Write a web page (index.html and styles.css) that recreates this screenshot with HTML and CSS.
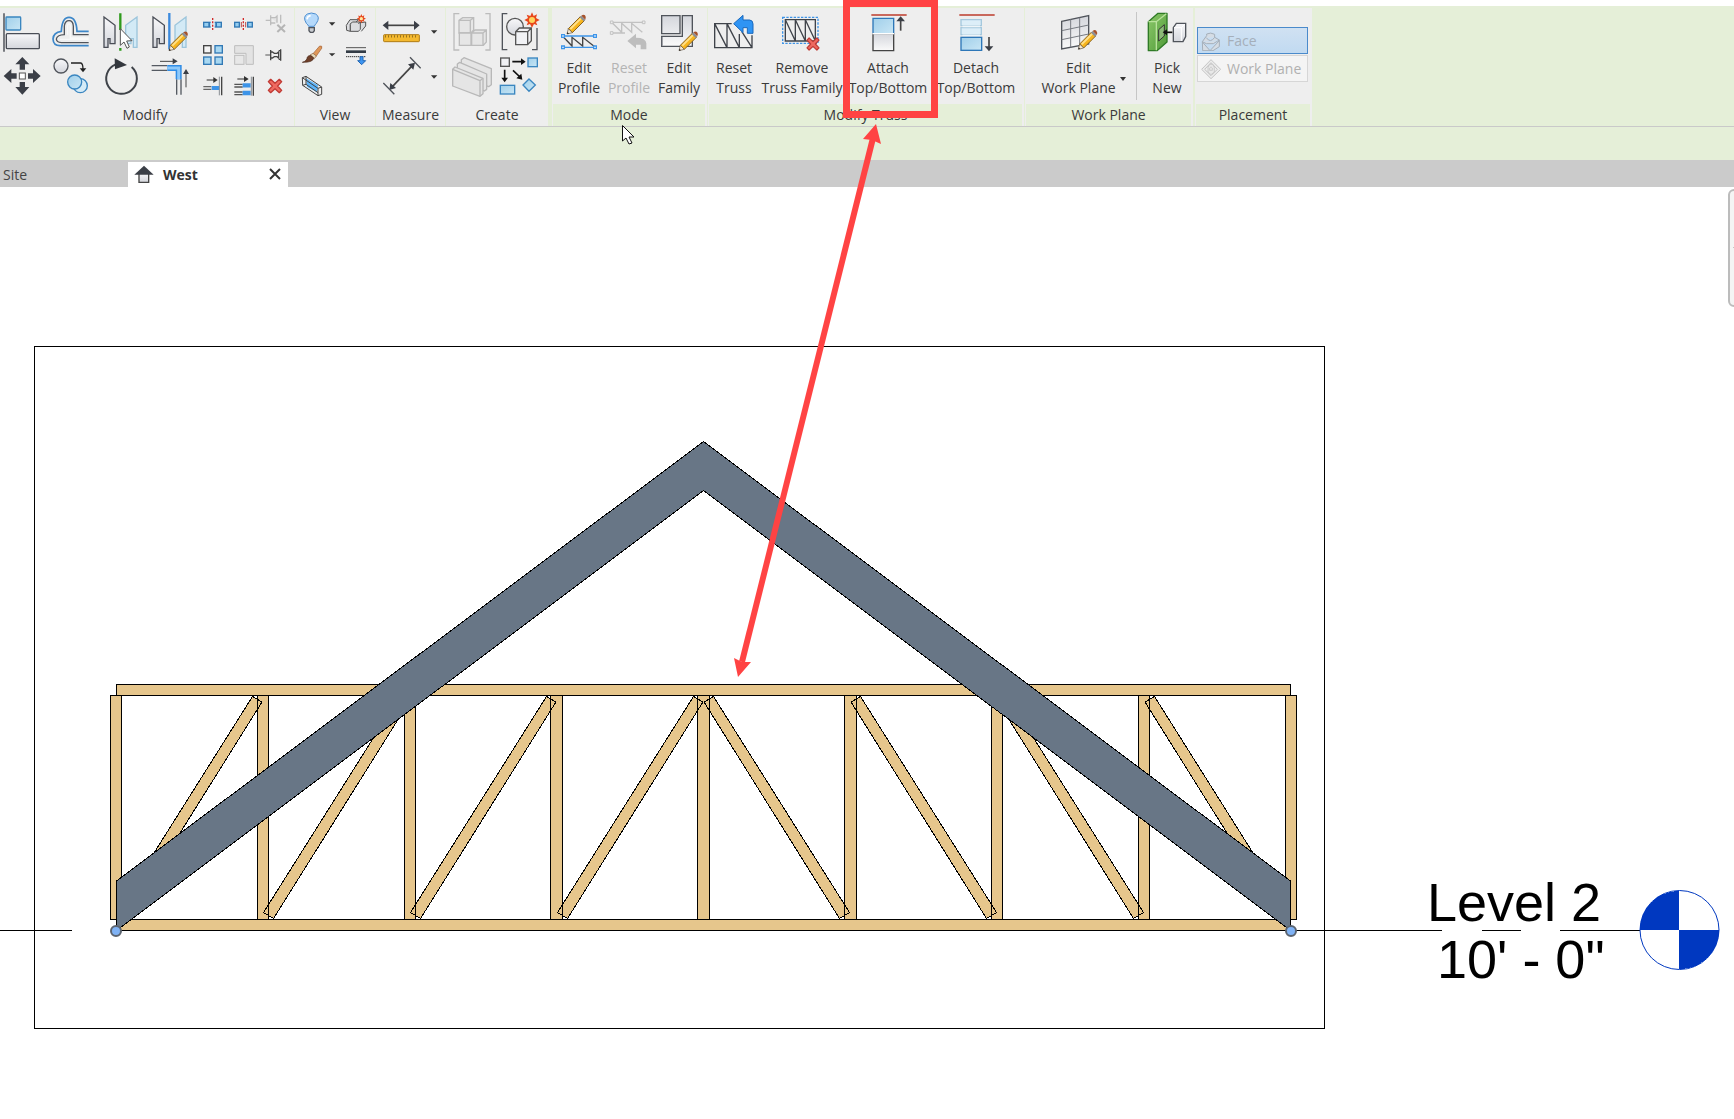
FILE: index.html
```html
<!DOCTYPE html>
<html lang="en">
<head>
<meta charset="utf-8">
<title>West - Elevation</title>
<link rel="stylesheet" href="styles.css">
</head>
<body>
<svg class="defs" aria-hidden="true">
  <defs>
    <linearGradient id="blue" x1="0" y1="0" x2="1" y2="1"><stop offset="0" stop-color="#a0cfea"/><stop offset="1" stop-color="#c9e6f5"/></linearGradient>
    <linearGradient id="pale" x1="0" y1="0" x2="0" y2="1"><stop offset="0" stop-color="#f8f8fa"/><stop offset="1" stop-color="#d4d6dc"/></linearGradient>
    <linearGradient id="metal" x1="0" y1="0" x2="0" y2="1"><stop offset="0" stop-color="#d4d6dc"/><stop offset="1" stop-color="#fafafa"/></linearGradient>
    <linearGradient id="green" x1="0" y1="0" x2="1" y2="1"><stop offset="0" stop-color="#8cc86a"/><stop offset="1" stop-color="#4f9a38"/></linearGradient>
    <g id="pencil">
      <path d="M4-16 40-52 52-40 16-4z" fill="#f7b51e" stroke="#8a6320" stroke-width="3"/>
      <path d="M8-17 42-51 46-47 12-13z" fill="#ffe08a"/>
      <path d="M0 0 4-16 16-4z" fill="#f8ead0" stroke="#5f5240" stroke-width="2"/>
      <path d="M0 0 1-6 6-1z" fill="#222"/>
      <path d="M38-50 43-55 55-43 50-38z" fill="#8b8f96"/>
      <path d="M43-55Q49-60 54-56 59-50 55-43z" fill="#a5522c"/>
    </g>
    <path id="cross" d="M-20-13-13-20 0-8 13-20 20-13 8 0 20 13 13 20 0 8-13 20-20 13-8 0z" fill="#ef6a60" stroke="#c03a34" stroke-width="4" stroke-linejoin="round"/>
    <path id="burst" d="M0-23 5-12 15-17 12-6 23 0 12 6 16 16 6 12 0 23-6 12-16 16-12 6-23 0-12-6-16-16-5-12z" fill="#e8471c"/>
  </defs>
</svg>

<header class="ribbon">
  <section class="panel panel-modify">
    <div class="panel-body">
      <div class="tools-large">
        <button class="tool" aria-label="Align"><svg viewBox="6 36 120 120"><path d="M12 40V155" stroke="#3b3f47" stroke-width="4"/><rect x="18" y="51" width="44" height="39" rx="2" fill="url(#blue)" stroke="#3a86c0" stroke-width="4"/><rect x="19" y="101" width="99" height="45" rx="3" fill="url(#pale)" stroke="#4a4e57" stroke-width="4"/></svg></button>
        <button class="tool" aria-label="Offset"><svg viewBox="153 36 120 120"><g fill="none" stroke-width="5"><path d="M266 137H180Q160 137 159 117 160 97 184 94 186 52 207 52 229 52 231 94H266" stroke="#3d87c9"/><path d="M266 118H180M203 104V75Q207 68 211 75V114H266" stroke="#f8f8f8" stroke-width="4"/><path d="M266 128H184Q170 127 169 117 171 105 193 104V78Q195 62 207 62 219 62 220 78V104H266" stroke="#50545b" stroke-width="4"/></g></svg></button>
        <button class="tool" aria-label="Mirror - Pick Axis"><svg viewBox="300 36 120 120"><path d="M312 51 345 76V131H330V116H324V142H312z" fill="url(#pale)" stroke="#4a4e57" stroke-width="4"/><path d="M411 51 377 76V131H393V116H400V142H411z" fill="#d3eaf6" stroke="#9cc5dc" stroke-width="4"/><path d="M361 40V152" stroke="#2f9a1c" stroke-width="7" stroke-dasharray="50 54"/><path d="M361 86V136L372 126 381 145 388 141 380 123 396 122z" fill="#fff" stroke="#555" stroke-width="3"/></svg></button>
        <button class="tool" aria-label="Mirror - Draw Axis"><svg viewBox="447 36 120 120"><path d="M459 51 493 76V131H478V116H471V142H459z" fill="url(#pale)" stroke="#4a4e57" stroke-width="4"/><path d="M558 51 525 76V131H540V116H547V142H558z" fill="#d3eaf6" stroke="#9cc5dc" stroke-width="4"/><path d="M508 39V148" stroke="#3b8ade" stroke-width="7"/><use href="#pencil" x="507" y="152"/></svg></button>
        <button class="tool" aria-label="Move"><svg viewBox="6 168 120 120"><path d="M67 171 88 193H75V209H59V193H46zM67 284 46 261H59V246H75V261H88zM11 228 34 207V220H50V236H34V249zM122 228 99 207V220H84V236H99V249z" fill="#3b3f47"/><rect x="58" y="219" width="18" height="18" fill="#fff" stroke="#555" stroke-width="3"/></svg></button>
        <button class="tool" aria-label="Copy"><svg viewBox="153 168 120 120"><circle cx="183" cy="198" r="21" fill="url(#pale)" stroke="#50545b" stroke-width="4"/><path d="M213 189H242Q249 190 249 208" fill="none" stroke="#222" stroke-width="4"/><path d="M239 205H259L249 217z" fill="#222"/><circle cx="241" cy="257" r="21" fill="#d5ebf7" stroke="#3a86c0" stroke-width="4"/><circle cx="224" cy="246" r="21" fill="url(#blue)" stroke="#3a86c0" stroke-width="4"/></svg></button>
        <button class="tool" aria-label="Rotate"><svg viewBox="300 168 120 120"><path d="M395 201A46 46 0 1 1 347 193" fill="none" stroke="#3f4349" stroke-width="6"/><path d="M344 175 381 195 345 208z" fill="#33373d"/></svg></button>
        <button class="tool" aria-label="Trim/Extend to Corner"><svg viewBox="447 168 120 120"><path d="M455 197H502M455 211H502M530 238V284M543 238V284" stroke="#555a62" stroke-width="4"/><path d="M502 204H536V238" fill="none" stroke="#2f8ce6" stroke-width="18"/><path d="M502 204H536V238" fill="none" stroke="#8cc8fa" stroke-width="9"/><path d="M480 184H525M558 262V216" stroke="#444" stroke-width="3"/><path d="M518 175 533 184 518 193zM549 222 558 207 567 222z" fill="#3b3f47"/></svg></button>
      </div>
      <div class="tools-small">
        <button class="tool" aria-label="Split Element"><svg viewBox="603 36 72 72"><rect x="611" y="67" width="53" height="14" fill="#94cdf0" stroke="#3279b5" stroke-width="4"/><path d="M638 55V94" stroke="#eee" stroke-width="12"/><path d="M638 54V94" stroke="#d22a2a" stroke-width="4" stroke-dasharray="6 4"/><path d="M630 74H625M646 74H651" stroke="#3279b5" stroke-width="14"/></svg></button>
        <button class="tool" aria-label="Split with Gap"><svg viewBox="696 36 72 72"><rect x="704" y="67" width="14" height="14" fill="#94cdf0" stroke="#3279b5" stroke-width="4"/><rect x="743" y="67" width="14" height="14" fill="#94cdf0" stroke="#3279b5" stroke-width="4"/><path d="M730 54V94" stroke="#d22a2a" stroke-width="4" stroke-dasharray="6 4"/><path d="M724 66V82M737 66V82" stroke="#b94a4a" stroke-width="3"/></svg></button>
        <button class="tool" aria-label="Unpin" disabled><svg viewBox="789 36 72 72"><g fill="#e4e4e4" stroke="#bdbdbd" stroke-width="4"><path d="M797 61H811M812 46V76M812 53H826L831 48V68M842 44V70M812 69H826"/><path d="M832 74 855 96M855 74 832 96" stroke="#b5b5b5" stroke-width="6"/></g></svg></button>
        <button class="tool" aria-label="Array"><svg viewBox="603 129 72 72"><g fill="#a8d8f2" stroke="#3279b5" stroke-width="4"><rect x="611" y="137" width="22" height="22" fill="#f4f4f4" stroke="#444"/><rect x="645" y="137" width="22" height="22"/><rect x="611" y="171" width="22" height="22"/><rect x="645" y="171" width="22" height="22"/></g></svg></button>
        <button class="tool" aria-label="Scale" disabled><svg viewBox="696 129 72 72"><path d="M704 137H760V193H738V160H704z" fill="#e3e3e3" stroke="#bdbdbd" stroke-width="3"/><rect x="704" y="166" width="28" height="27" fill="#e8e8e8" stroke="#bdbdbd" stroke-width="3"/></svg></button>
        <button class="tool" aria-label="Pin"><svg viewBox="789 129 72 72"><path d="M796 165H811" stroke="#555" stroke-width="3"/><path d="M812 150V181M812 156H817L823 160H831L836 156V174L831 170H823L817 174H812M842 148V182M836 152H842M836 178H842" fill="none" stroke="#444" stroke-width="4"/></svg></button>
        <button class="tool" aria-label="Trim/Extend Single"><svg viewBox="603 222 72 72"><path d="M620 240H645" stroke="#333" stroke-width="3"/><path d="M640 231 653 240 640 249z" fill="#333"/><path d="M610 260H634M610 268H634" stroke="#666" stroke-width="4"/><path d="M635 264H658" stroke="#3d94e8" stroke-width="12"/><path d="M658 230V286" stroke="#8a8e95" stroke-width="3"/><path d="M665 230V286" stroke="#444" stroke-width="4"/></svg></button>
        <button class="tool" aria-label="Trim/Extend Multiple"><svg viewBox="696 222 72 72"><path d="M712 237H737" stroke="#333" stroke-width="3"/><path d="M732 228 746 237 732 246z" fill="#333"/><path d="M703 253H728M703 261H728M703 276H728M703 284H728" stroke="#555" stroke-width="4"/><path d="M728 256H752M728 279H752" stroke="#3d94e8" stroke-width="13"/><path d="M754 230V287" stroke="#8a8e95" stroke-width="3"/><path d="M760 230V287" stroke="#444" stroke-width="4"/></svg></button>
        <button class="tool" aria-label="Delete"><svg viewBox="789 222 72 72"><use href="#cross" x="825" y="258"/></svg></button>
      </div>
    </div>
    <h2 class="panel-title">Modify</h2>
  </section>

  <section class="panel panel-view">
    <div class="panel-body">
      <div class="tools-view">
        <button class="tool" aria-label="Hide in View"><svg viewBox="27 36 72 72"><path d="M56 79Q55 75 49 70 37 50 52 42 64 36 77 42 92 51 79 70 74 75 73 79z" fill="#b5d9fb" stroke="#4d8ed0" stroke-width="3"/><path d="M51 58Q52 48 62 47" stroke="#fff" stroke-width="5" fill="none"/><path d="M57 83H73V92L69 97H61L57 92z" fill="#c9ccd1" stroke="#50545b" stroke-width="4"/></svg></button>
        <button class="drop" aria-label="Hide options"><svg viewBox="111 36 30 72"><path d="M117 67H136L126 77z" fill="#333"/></svg></button>
        <button class="tool" aria-label="Displace Elements"><svg viewBox="162 36 72 72"><g fill="#dcdde0" stroke="#555" stroke-width="3"><path d="M169 76 180 59H206L196 68 181 72V94L170 91zM211 68 227 66V78L214 94"/><path d="M181 72H205V94H181z"/><path d="M181 72 187 66H211V88L205 94M205 72 211 66"/></g><use href="#burst" transform="translate(214 56) scale(.6)"/><circle cx="214" cy="56" r="5" fill="#ffe7a0"/></svg></button>
        <button class="tool" aria-label="Override Graphics"><svg viewBox="27 129 72 72"><path d="M69 161 89 138Q98 136 95 145L79 168z" fill="#df9758" stroke="#a05c30" stroke-width="2"/><path d="M60 165 69 160 79 168 73 176z" fill="#e5d8b8" stroke="#8a5a38" stroke-width="2"/><path d="M37 187Q51 183 52 171 61 161 71 174 69 188 37 187z" fill="#70402a" stroke="#492719" stroke-width="2"/></svg></button>
        <button class="drop" aria-label="Override options"><svg viewBox="111 129 30 72"><path d="M117 160H136L126 169z" fill="#333"/></svg></button>
        <button class="tool" aria-label="Linework"><svg viewBox="162 129 72 72"><path d="M168 143H228" stroke="#555" stroke-width="3"/><path d="M168 155H228" stroke="#333b45" stroke-width="8"/><path d="M168 170H228" stroke="#333" stroke-width="3" stroke-dasharray="4 2"/><path d="M210 170H219V182H227L215 194 203 182H210z" fill="#3d94f0" stroke="#2468b5" stroke-width="3"/></svg></button>
        <button class="tool" aria-label="Selection Box"><svg viewBox="27 222 72 72"><path d="M48 235 84 256 81 277 51 260z" fill="#5db4fa"/><path d="M37 233 48 229 95 261V283L84 287 38 256zM37 233 84 265V287M84 265 95 261M48 229V253L84 278M38 256 48 253" fill="none" stroke="#444" stroke-width="3"/></svg></button>
      </div>
    </div>
    <h2 class="panel-title">View</h2>
  </section>

  <section class="panel panel-measure">
    <div class="panel-body">
      <div class="tools-measure">
        <button class="tool" aria-label="Measure"><svg viewBox="273 36 120 120"><path d="M290 76H378" stroke="#444" stroke-width="5"/><path d="M278 76 295 62V90zM389 76 372 62V90z" fill="#3b3f47"/><rect x="281" y="104" width="107" height="21" rx="2" fill="#f4b92f" stroke="#b07c14" stroke-width="3"/><path d="M286 109H384" stroke="#6b4e12" stroke-width="7" stroke-dasharray="2 7"/></svg></button>
        <button class="drop" aria-label="Measure options"><svg viewBox="417 36 30 120"><path d="M423 91H442L432 101z" fill="#333"/></svg></button>
        <button class="tool" aria-label="Aligned Dimension"><svg viewBox="273 168 120 120"><path d="M305 262 367 197" stroke="#444" stroke-width="5"/><path d="M298 270 301 249 318 264zM375 188 354 193 370 209z" fill="#3b3f47"/><path d="M280 249 313 283M360 172 392 205" stroke="#50545b" stroke-width="4"/></svg></button>
        <button class="drop" aria-label="Dimension options"><svg viewBox="417 168 30 120"><path d="M423 226H442L432 236z" fill="#333"/></svg></button>
      </div>
    </div>
    <h2 class="panel-title">Measure</h2>
  </section>

  <section class="panel panel-create">
    <div class="panel-body">
      <div class="tools-create">
        <button class="tool" aria-label="Create Group" disabled><svg viewBox="486 36 120 120"><g fill="#e6e6e6" stroke="#bcbcbc" stroke-width="4"><path d="M508 41H492V150H508M586 41H600V150H586" fill="none"/><path d="M507 99V61L518 53H551V90L543 99zM507 61H541V99M541 61 551 53"/><path d="M508 99H543V136H508zM545 99 555 90H589V126L580 136H545zM545 99H579V136M579 99 589 90"/></g></svg></button>
        <button class="tool" aria-label="Create Similar"><svg viewBox="630 36 120 120"><path d="M652 41H637V149H652M726 149H741V84" fill="none" stroke="#50545b" stroke-width="4"/><circle cx="675" cy="80" r="25" fill="url(#pale)" stroke="#555" stroke-width="4"/><path d="M677 95 688 84H724V122L713 134H677zM677 95H713V134M713 95 724 84" fill="#f1f2f5" stroke="#555" stroke-width="4"/><use href="#burst" x="726" y="60"/><circle cx="726" cy="60" r="9" fill="#ffd45c"/></svg></button>
        <button class="tool" aria-label="Create Parts" disabled><svg viewBox="486 168 120 120"><g fill="#e5e5e5" stroke="#b8b8b8" stroke-width="4" stroke-linejoin="round"><path d="M514 179 522 173 604 206V254L596 260 514 230z"/><path d="M502 192 509 187 590 222V268L583 273 502 240z"/><path d="M488 208 495 201 579 235V281L570 289 488 258z"/><path d="M488 208 570 242V289M570 242 579 235" fill="none"/></g></svg></button>
        <button class="tool" aria-label="Create Assembly"><svg viewBox="630 168 120 120"><g stroke-width="4"><rect x="632" y="174" width="26" height="25" fill="#f0f1f4" stroke="#555"/><rect x="714" y="174" width="28" height="26" fill="url(#blue)" stroke="#3a86c0"/><rect x="631" y="256" width="43" height="26" fill="url(#blue)" stroke="#3a86c0"/><path d="M717 237 736 255 717 274 699 255z" fill="url(#blue)" stroke="#3a86c0"/><path d="M667 185H697M644 209V237M669 211 690 231" stroke="#111" stroke-width="5"/></g><path d="M693 175 707 185 693 195zM634 233H654L644 247zM697 239 679 235 694 221z" fill="#111"/></svg></button>
      </div>
    </div>
    <h2 class="panel-title">Create</h2>
  </section>

  <section class="panel contextual panel-mode">
    <div class="panel-body">
      <button class="command"><svg viewBox="42 36 120 120"><use href="#pencil" x="66" y="102"/><path d="M56 112 81 138V112L113 138V112L150 141" fill="none" stroke="#444" stroke-width="4"/><path d="M54 108H150M54 142H150" stroke="#3d94e8" stroke-width="4"/><g fill="#fff" stroke="#3d94e8" stroke-width="4"><path d="M50 104h8v8h-8zM146 104h8v8h-8zM50 138h8v8h-8zM146 138h8v8h-8z"/></g></svg><span>Edit<br>Profile</span></button>
      <button class="command" disabled><svg viewBox="192 36 120 120"><path d="M200 67H296M200 99H240M203 70 230 97V70L260 97V70L292 97" fill="none" stroke="#c2c2c2" stroke-width="4"/><path d="M196 63h8v8h-8zM292 63h8v8h-8zM196 95h8v8h-8z" fill="#eee" stroke="#c2c2c2" stroke-width="3"/><path d="M247 123 273 101V113Q303 113 304 130V148H287V134H273V145z" fill="#bdbdbd"/></svg><span>Reset<br>Profile</span></button>
      <button class="command"><svg viewBox="342 36 120 120"><path d="M350 47H405V101H350zM412 47H442V139H350V109H412z" fill="url(#metal)" stroke="#50545b" stroke-width="4"/><path d="M352 137V111" stroke="#9a9da3" stroke-width="3"/><use href="#pencil" x="402" y="152"/></svg><span>Edit<br>Family</span></button>
    </div>
    <h2 class="panel-title">Mode</h2>
  </section>

  <section class="panel contextual panel-truss">
    <div class="panel-body">
      <button class="command command-reset"><svg viewBox="507 36 120 120"><path d="M560 71H509V143H621V106M509 71 546 143V71L583 143V102M590 94 621 143" fill="none" stroke="#3f434a" stroke-width="4"/><path d="M566 71 594 46V60H614Q624 61 624 72V100H607V83H594V98z" fill="#2f94f4" stroke="#1a69bd" stroke-width="3"/></svg><span>Reset<br>Truss</span></button>
      <button class="command command-remove"><svg viewBox="711 36 120 120"><rect x="713" y="52" width="106" height="78" fill="none" stroke="#3d94e8" stroke-width="4" stroke-dasharray="7 4"/><path d="M721 59H811V123H721zM721 59 751 123V59L781 123V59L811 123" fill="none" stroke="#3f434a" stroke-width="4"/><use href="#cross" transform="translate(804 132) scale(.9)"/></svg><span>Remove<br>Truss Family</span></button>
      <button class="command command-attach"><svg viewBox="114 36 120 120"><path d="M124 45H230" stroke="#c9685c" stroke-width="6"/><path d="M129 101V55H191V101z" fill="url(#blue)" stroke="#2d77b8" stroke-width="4"/><path d="M129 101V152H191V101z" fill="url(#metal)" stroke="#444" stroke-width="4"/><path d="M127 101H193" stroke="#fff" stroke-width="4"/><path d="M212 92V61" stroke="#444" stroke-width="5"/><path d="M199 64 212 49 225 64z" fill="#3b3f47"/></svg><span>Attach<br>Top/Bottom</span></button>
      <button class="command command-attach"><svg viewBox="378 36 120 120"><path d="M388 45H494" stroke="#c9685c" stroke-width="6"/><path d="M393 77V59H454V77zM393 104V83H454V104z" fill="#dceef8" stroke="#a5c8dd" stroke-width="4"/><path d="M397 79H450M397 106H450" stroke="#eef5f9" stroke-width="5"/><rect x="393" y="112" width="62" height="39" fill="url(#blue)" stroke="#2d77b8" stroke-width="4"/><path d="M477 111V141" stroke="#444" stroke-width="5"/><path d="M464 139H490L477 154z" fill="#3b3f47"/></svg><span>Detach<br>Top/Bottom</span></button>
    </div>
    <h2 class="panel-title">Modify Truss</h2>
  </section>

  <section class="panel contextual panel-plane">
    <div class="panel-body">
      <button class="command command-plane"><svg viewBox="684 36 120 120"><path d="M692 64 773 47V132L692 147z" fill="url(#metal)" stroke="#50545b" stroke-width="4"/><path d="M719 58V142M746 53V137M692 92 773 75M692 119 773 102" stroke="#777b82" stroke-width="3"/><use href="#pencil" x="742" y="148"/></svg><span>Edit<br>Work Plane</span><svg class="corner" viewBox="0 0 10 6"><path d="M2 1H8L5 5z" fill="#333"/></svg></button>
      <button class="command command-pick"><svg viewBox="111 36 120 120"><path d="M115 65 144 40H171V126L141 152H115z" fill="url(#green)" stroke="#2f7a26" stroke-width="4" stroke-linejoin="round"/><path d="M115 65H139L169 41M139 65V151" fill="none" stroke="#b9e29c" stroke-width="4"/><path d="M146 89 163 74V108L146 123z" fill="#8cba78" stroke="#333" stroke-width="3"/><path d="M190 83 199 70H227V110L219 125H190z" fill="url(#pale)" stroke="#50545b" stroke-width="4"/><path d="M192 83H214L225 72M214 83V123" fill="none" stroke="#fff" stroke-width="3"/><path d="M169 97H187" stroke="#111" stroke-width="5"/><path d="M158 97 171 88V106z" fill="#111"/></svg><span>Pick<br>New</span></button>
    </div>
    <h2 class="panel-title">Work Plane</h2>
  </section>

  <section class="panel contextual panel-placement">
    <div class="panel-body">
      <button class="choice selected" disabled><svg viewBox="273 92 60 60"><path d="M277 124 290 106V101Q302 95 314 102V111L328 119V139L309 151H278zM277 124 289 130H310L328 119M289 112Q301 130 314 111M278 126 300 151 327 122" fill="#d5dce4" stroke="#a5afba" stroke-width="3"/></svg>Face</button>
      <button class="choice" disabled><svg viewBox="273 177 60 60"><path d="M303 179 332 208 303 236 275 208zM303 188 322 208 303 227 284 208z" fill="#ececec" stroke="#c4c4c4" stroke-width="3"/><path d="M294 202 299 193H308L313 202V216L303 224 294 216zM299 204Q303 197 307 204V211H299z" fill="#e8e8e8" stroke="#bdbdbd" stroke-width="2"/></svg>Work Plane</button>
    </div>
    <h2 class="panel-title">Placement</h2>
  </section>
</header>

<div class="options-bar"></div>

<nav class="view-tabs">
  <a class="view-tab" href="#site">Site</a>
  <div class="view-tab active">
    <svg class="home" viewBox="402 492 60 60"><path d="M417 518H446V547H417z" fill="url(#pale)" stroke="#444" stroke-width="4"/><path d="M403 524 432 497 461 524z" fill="#3b3f47"/></svg>
    <a href="#west">West</a>
    <button class="close" aria-label="Close West"><svg viewBox="0 0 12 12"><path d="M1 1 11 11M11 1 1 11" stroke="#333" stroke-width="2"/></svg></button>
  </div>
</nav>

<main class="canvas">
  <svg class="drawing" viewBox="0 187 1734 932" preserveAspectRatio="xMinYMin meet" role="img" aria-label="West elevation with truss and roof">
    <defs>
      <path id="brace" d="M693.500 696.500 703 702 567.500 918.500 557.500 912.500z"/>
      <g id="braces">
        <use href="#brace"/><use href="#brace" x="-147"/><use href="#brace" x="-294"/><use href="#brace" x="-441"/>
      </g>
      <g id="members">
        <path d="M110.500 695.500h11v224h-11zM257.500 695.500h11v224h-11zM404.500 695.500h11v224h-11zM550.500 695.500h12v224h-12zM697.500 695.500h12v224h-12zM844.500 695.500h12v224h-12zM991.500 695.500h11v224h-11zM1138.500 695.500h11v224h-11zM1285.500 695.500h11v224h-11z"/>
        <use href="#braces"/>
        <use href="#braces" transform="translate(1407 0) scale(-1 1)"/>
        <path d="M116.500 684.500h1174v11h-1174zM116.500 919.500h1174v11h-1174z"/>
      </g>
    </defs>
    <rect class="outline" x="34.500" y="346.500" width="1290" height="682"/>
    <path class="outline" d="M0 930.500H72M1290 930.500H1442M1482 930.500H1521M1560 930.500H1640"/>
    <use class="timber" href="#members"/>
    <use class="outline" href="#members"/>
    <path class="roof" d="M116.500 881 703.500 441.500 1290.500 881V930.500L703.500 490.500 116.500 930.500z"/>
    <g class="grip"><circle cx="116" cy="931" r="5"/><circle cx="1291" cy="931" r="5"/></g>
    <circle class="marker-ring" cx="1679.500" cy="930" r="39.500"/>
    <path class="marker-fill" d="M1679 930V891A39 39 0 0 0 1640 930zM1679 930H1719A39 39 0 0 1 1679 969z"/>
    <text class="level" x="1427" y="921">Level 2</text>
    <text class="level" x="1437" y="978">10' - 0"</text>
  </svg>
  <div class="nav-bar"></div>
</main>

<svg class="annotation" viewBox="0 0 1734 1119" preserveAspectRatio="xMinYMin meet" aria-hidden="true">
  <rect x="846.500" y="3.500" width="88" height="111" fill="none" stroke="#ff4343" stroke-width="7"/>
  <path d="M873 138 742 662" stroke="#ff4343" stroke-width="6"/>
  <path d="M876 124 881 144 872 140 863 139zM738 677 734 658 742 662 751 662z" fill="#ff4343"/>
  <path d="M622.500 125.500V141L626 138 629 144 632 143 629 137H634z" fill="#fff" stroke="#111"/>
</svg>
</body>
</html>
```
FILE: styles.css
```css
* { box-sizing: border-box; }

body {
  margin: 0;
  min-height: 100vh;
  display: flex;
  flex-direction: column;
  position: relative;
  overflow-x: hidden;
  background: #fff;
  color: #3a3a3a;
  font: 14px/20px "Open Sans", "Noto Sans", sans-serif;
}

button {
  margin: 0;
  padding: 0;
  border: 0;
  background: none;
  color: inherit;
  font: inherit;
}

svg { display: block; }
.defs { position: absolute; width: 0; height: 0; }

/* Ribbon */
.ribbon {
  display: flex;
  margin-top: 6px;
  padding-top: 2px;
  height: 120px;
  background: #e5efd8;
}

.panel {
  flex: none;
  display: flex;
  flex-direction: column;
  background: #eee;
  border-right: 1px solid #e5efd8;
}

.panel-body {
  display: flex;
  height: 96px;
  padding-top: 4px;
}

.panel-title {
  margin: 0;
  height: 22px;
  font-size: 14px;
  line-height: 22px;
  font-weight: 400;
  text-align: center;
}

.contextual .panel-title {
  margin: 0 2px 0 1px;
  background: #e5efd8;
}

.panel-modify { width: 295px; }
.panel-modify .panel-title { margin-right: 4px; }
.panel-view { width: 81px; }
.panel-measure { width: 70px; }
.panel-create { width: 106px; border-right-width: 4px; }
.panel-mode { width: 156px; }
.panel-truss { width: 317px; }
.panel-plane { width: 170px; border-right-width: 2px; }
.panel-placement { width: 117px; border-right: 0; }

.tool svg, .command svg { width: 100%; height: 100%; overflow: visible; }
.drop svg { width: 10px; height: 100%; }

.tools-large {
  display: grid;
  grid-template: repeat(2, 40px) / repeat(4, 40px);
  gap: 4px 9px;
  margin-left: 2px;
}

.tools-small {
  display: grid;
  grid-template: repeat(3, 24px) / repeat(3, 24px);
  gap: 7px;
  margin-left: 12px;
}

.tools-view {
  display: grid;
  grid-template: repeat(3, 24px) / 24px 10px 24px;
  gap: 7px 4px;
  margin-left: 4px;
}
.tools-view .tool:nth-child(3n) { margin: 0 -3px 0 3px; }

.tools-measure {
  display: grid;
  grid-template: repeat(2, 40px) / 40px 10px;
  gap: 4px 8px;
  margin-left: 5px;
}

.tools-create {
  display: grid;
  grid-template: repeat(2, 40px) / repeat(2, 40px);
  gap: 4px 8px;
  margin-left: 6px;
}

.command {
  flex: none;
  position: relative;
  display: flex;
  flex-direction: column;
  align-items: center;
  gap: 6px;
  width: 50px;
  height: 88px;
  white-space: nowrap;
}
.command svg { flex: none; width: 40px; height: 40px; }
.command span { flex: none; }
.command:disabled { color: #b4b4b4; }
.command .corner { position: absolute; right: 8px; bottom: 18px; width: 10px; height: 6px; }

.panel-mode .panel-body { padding-left: 2px; }
.command-reset { width: 52px; }
.command-remove { width: 84px; }
.command-attach { width: 88px; }
.command-plane { width: 111px; padding-right: 4px; }
.command-pick { width: 57px; padding-left: 4px; border-left: 1px solid #c6c6c6; }

.panel-placement .panel-body {
  flex-direction: column;
  gap: 1px;
  padding: 19px 4px 0 2px;
}

.choice {
  display: flex;
  align-items: center;
  gap: 6px;
  height: 27px;
  padding-left: 3px;
  border: 1px solid #d6d6d6;
  background: #f4f4f4;
  color: #b0b0b0;
  white-space: nowrap;
}
.choice svg { width: 20px; height: 20px; }
.choice.selected {
  border-color: #4a8acb;
  background: linear-gradient(#d0e1f2, #c1daf1);
  color: #a5afba;
}

.options-bar {
  height: 34px;
  border-top: 1px solid #c9c9c9;
  background: #e5efd8;
}

/* View tabs */
.view-tabs {
  display: flex;
  height: 27px;
  padding-top: 2px;
  background: #cbcbcb;
}
.view-tab {
  width: 128px;
  padding-left: 3px;
  line-height: 25px;
  color: #444;
  text-decoration: none;
}
.view-tab.active {
  display: flex;
  align-items: center;
  width: 160px;
  padding: 0 7px 1px 6px;
  background: #fff;
}
.view-tab a { color: #333; font-weight: 700; text-decoration: none; }
.home { width: 20px; height: 20px; margin-right: 9px; }
.close { margin-left: auto; }
.close svg { width: 12px; height: 12px; }

/* Drawing area */
.canvas {
  flex: 1;
  position: relative;
  overflow: hidden;
}
.drawing { width: 100%; }
.drawing path, .drawing use, .drawing rect { shape-rendering: crispEdges; }
.outline { fill: none; stroke: #000; }
.timber { fill: #e6c68c; }
.roof { fill: #687686; stroke: #000; }
.grip { fill: #7fb2f5; stroke: #5b6470; stroke-width: 2; }
.marker-ring { fill: #fff; stroke: #0038c0; }
.marker-fill { fill: #0038c0; }
.level { font: 54px "Liberation Sans", Arial, sans-serif; fill: #000; }

.nav-bar {
  position: absolute;
  top: 2px;
  right: -34px;
  width: 40px;
  height: 118px;
  border: 2px solid #bcbcbc;
  border-radius: 6px;
  background: linear-gradient(#c4c4c4, #c4c4c4) 3px 56px / 100% 1px no-repeat #f4f4f4;
}

.annotation {
  position: absolute;
  top: 0;
  left: 0;
  width: 100%;
  pointer-events: none;
}
```
